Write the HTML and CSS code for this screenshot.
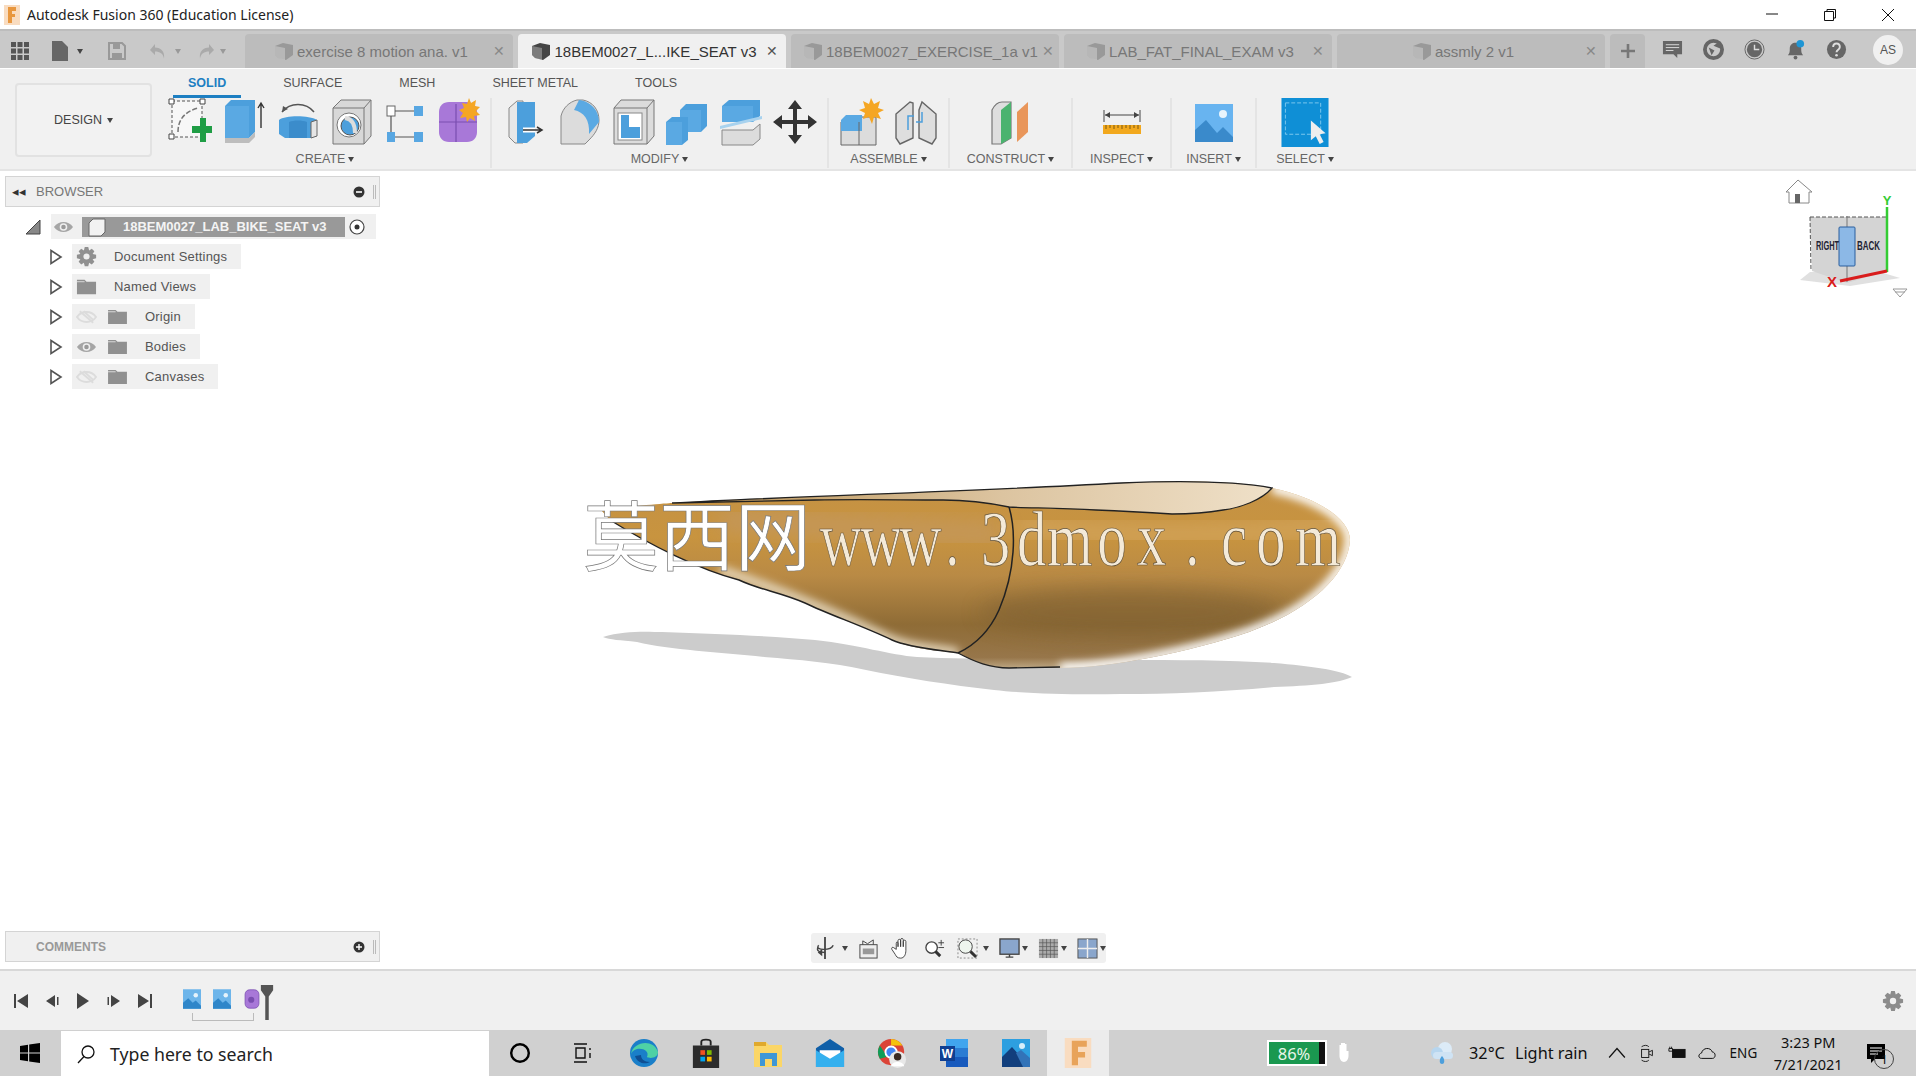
FILE: index.html
```html
<!DOCTYPE html>
<html lang="en">
<head>
    <meta charset="UTF-8">
    <title>Autodesk Fusion 360 (Education License)</title>
    <link rel="stylesheet" href="styles.css">
</head>
<body>
<svg class="defs" width="0" height="0">
    <defs>
        <symbol id="tabcube" viewBox="0 0 20 20"><path d="M1 5l8-3 10 2v10l-7 5-8-2-3-3z" fill="currentColor"/><path d="M1 5l10 2v12l-7-2-3-3z" fill="#fff" opacity=".3"/></symbol>
        <symbol id="folder" viewBox="0 0 22 18"><path d="M1 2h8l2 2h10v13H1z" fill="#909090"/><path d="M1 4h8" stroke="#ddd" stroke-width="1"/></symbol>
        <symbol id="eye" viewBox="0 0 22 14"><path d="M1 7c5-7 15-7 20 0-5 7-15 7-20 0z" fill="#a5a5a5"/><circle cx="11" cy="7" r="4" fill="#eee"/><circle cx="11" cy="7" r="2.4" fill="#999"/></symbol>
        <symbol id="eyeoff" viewBox="0 0 22 14"><path d="M1 7c5-7 15-7 20 0-5 7-15 7-20 0z" fill="none" stroke="#dcdcdc" stroke-width="2"/><path d="M4 1l14 12M8 1l10 9" stroke="#dcdcdc" stroke-width="2"/></symbol>
        <symbol id="expand" viewBox="0 0 14 16"><path d="M2 1.500l10 6.500-10 6.500z" fill="#fff" stroke="#555" stroke-width="1.600"/></symbol>
        <symbol id="photo" viewBox="0 0 24 26"><rect width="24" height="26" fill="#6db5ea"/><circle cx="17" cy="8" r="3" fill="#e6f3fb"/><path d="M0 26v-8l7-6 6 6 4-3 7 7v4z" fill="#2f86c9"/></symbol>
    </defs>
</svg>

<div class="app">
    <div class="titlebar">
        <svg class="app-logo" viewBox="0 0 16 20"><rect width="16" height="20" fill="#f9dcc0"/><path d="M4 2h8v4H8v3h3v3H8v6H4z" fill="#e8973e"/></svg>
        <span class="title-text">Autodesk Fusion 360 (Education License)</span>
        <div class="win-btns">
            <svg viewBox="0 0 14 14"><path d="M1 6h12" stroke="#111" stroke-width="1"/></svg>
            <svg viewBox="0 0 14 14"><path d="M1.500 3.500h9v9h-9zM4 3.500V1.500h8.500V10h-2" fill="none" stroke="#111"/></svg>
            <svg viewBox="0 0 14 14"><path d="M1 1l12 12M13 1L1 13" stroke="#111"/></svg>
        </div>
    </div>

    <div class="tabbar">
        <div class="quick">
            <svg class="q-grid" viewBox="0 0 18 18"><path d="M0 0h5v5H0zM6.500 0h5v5h-5zM13 0h5v5h-5zM0 6.500h5v5H0zM6.500 6.500h5v5h-5zM13 6.500h5v5h-5zM0 13h5v5H0zM6.500 13h5v5h-5zM13 13h5v5h-5z" fill="#555"/></svg>
            <svg class="q-file" viewBox="0 0 16 20"><path d="M0 0h10l6 6v14H0z" fill="#666"/></svg>
            <span class="caret q-c1"></span>
            <svg class="q-save" viewBox="0 0 18 18"><path d="M1 1h13l3 3v13H1z" fill="none" stroke="#999" stroke-width="2"/><path d="M5 2h7v5H5zM4 11h10v6H4z" fill="#999"/></svg>
            <svg class="q-undo" viewBox="0 0 18 18"><path d="M6 2L1 8l5 5V9.500c5 0 8 2 9 7 1-7-3-11-9-11z" fill="#aaa"/></svg>
            <span class="caret q-c2"></span>
            <svg class="q-redo" viewBox="0 0 18 18"><path d="M12 2l5 6-5 5V9.500c-5 0-8 2-9 7-1-7 3-11 9-11z" fill="#aaa"/></svg>
            <span class="caret q-c3"></span>
        </div>
        <div class="tabs">
            <div class="tab">
                <div class="tab-label"><svg class="tab-cube"><use href="#tabcube"/></svg>exercise 8 motion ana. v1</div>
                <span class="tab-close">✕</span>
            </div>
            <div class="tab tab-active">
                <div class="tab-label"><svg class="tab-cube"><use href="#tabcube"/></svg>18BEM0027_L...IKE_SEAT v3</div>
                <span class="tab-close">✕</span>
            </div>
            <div class="tab">
                <div class="tab-label"><svg class="tab-cube"><use href="#tabcube"/></svg>18BEM0027_EXERCISE_1a v1</div>
                <span class="tab-close">✕</span>
            </div>
            <div class="tab">
                <div class="tab-label"><svg class="tab-cube"><use href="#tabcube"/></svg>LAB_FAT_FINAL_EXAM v3</div>
                <span class="tab-close">✕</span>
            </div>
            <div class="tab">
                <div class="tab-label"><svg class="tab-cube"><use href="#tabcube"/></svg>assmly 2 v1</div>
                <span class="tab-close">✕</span>
            </div>
            <div class="tab-add"><svg viewBox="0 0 16 16"><path d="M8 1v14M1 8h14" stroke="#777" stroke-width="2.600"/></svg></div>
        </div>
        <div class="tools-right">
            <svg viewBox="0 0 22 20"><path d="M1 1h20v14h-5v4l-4-4H1z" fill="#666"/><path d="M4 5h14M4 8h14M4 11h8" stroke="#ddd"/></svg>
            <svg viewBox="0 0 22 22"><circle cx="11" cy="11" r="9" fill="none" stroke="#666" stroke-width="4"/><path d="M11 7l7-5v8zM6 9l6 3-3 5z" fill="#666"/></svg>
            <svg viewBox="0 0 22 22"><circle cx="11" cy="11" r="10" fill="none" stroke="#666"/><circle cx="11" cy="11" r="8" fill="#666"/><path d="M11 6v5h5" fill="none" stroke="#ddd" stroke-width="1.500"/></svg>
            <svg viewBox="0 0 22 22"><path d="M3 17c2-2 2-4 2-7 0-4 3-6 6-6s6 2 6 6c0 3 0 5 2 7z" fill="#666"/><circle cx="11" cy="19.500" r="2" fill="#666"/><circle cx="16" cy="5" r="4" fill="#1e95d4"/></svg>
            <svg viewBox="0 0 22 22"><circle cx="11" cy="11" r="10" fill="#666"/><path d="M7.500 8.500c0-5 7-5 7 0 0 3-3.500 2.500-3.500 5.500" fill="none" stroke="#ddd" stroke-width="2"/><circle cx="11" cy="17" r="1.400" fill="#ddd"/></svg>
            <span class="avatar">AS</span>
        </div>
    </div>

    <div class="ribbon">
        <div class="design-btn">DESIGN<span class="caret"></span></div>
        <div class="ribbon-main">
            <div class="ribbon-tabs">
                <span class="r-tab r-tab-active">SOLID</span>
                <span class="r-tab">SURFACE</span>
                <span class="r-tab">MESH</span>
                <span class="r-tab">SHEET METAL</span>
                <span class="r-tab">TOOLS</span>
            </div>
            <div class="ribbon-groups">
                <div class="group g-create">
                    <div class="group-icons">
                        <svg viewBox="0 0 44 48"><rect x="4" y="3" width="30" height="36" fill="#f7f7f7" stroke="#555" stroke-dasharray="3 2"/><path d="M1 1h5v5H1zM32 1h5v5h-5zM1 36h5v5H1z" fill="#fff" stroke="#444"/><path d="M10 34c0-12 6-20 20-24" fill="none" stroke="#777" stroke-width="1.500" stroke-dasharray="5 2"/><path d="M24 28h8v-8h6v8h6v7h-6v9h-6v-9h-8z" fill="#1f9d45"/></svg>
                        <svg viewBox="0 0 44 48"><path d="M3 8l6-6h24v32l-6 6H3z" fill="#4c9fdc"/><path d="M3 8h24v32H3z" fill="#5aa9e3"/><path d="M3 40h24l6-6v5l-6 6H3z" fill="#bdbdbd"/><path d="M39 30V6m-3 4l3-5 3 5" fill="none" stroke="#333" stroke-width="1.400"/></svg>
                        <svg viewBox="0 0 44 48"><path d="M3 22c6-5 30-5 38 0v16l-6 2H9l-6-4z" fill="#4c9fdc"/><path d="M13 24c5-2 13-2 18 0v16H13z" fill="#3b8ccb"/><path d="M35 24l6-2v16l-6 2z" fill="#e5e5e5" stroke="#666"/><path d="M6 14C14 4 30 4 38 14" fill="none" stroke="#555" stroke-width="1.500"/><path d="M6 14l1-6 5 3z" fill="#555"/></svg>
                        <svg viewBox="0 0 44 48"><path d="M3 10l8-8h30v36l-7 8H3z" fill="#d8d8d8" stroke="#777"/><path d="M3 10h31v36M34 10l7-8" fill="none" stroke="#777"/><circle cx="19" cy="27" r="12" fill="#fff" stroke="#777"/><circle cx="20" cy="28" r="9" fill="#4c9fdc" stroke="#555"/><path d="M15 20c8 1 10 7 10 15" fill="none" stroke="#ddd" stroke-width="4"/></svg>
                        <svg viewBox="0 0 44 48"><rect x="3" y="8" width="8" height="10" fill="#fff" stroke="#666"/><rect x="30" y="8" width="9" height="10" fill="#58a7e2"/><rect x="3" y="34" width="8" height="10" fill="#58a7e2"/><rect x="30" y="34" width="9" height="10" fill="#58a7e2"/><path d="M11 13h19M7 18v16M11 39h19" stroke="#555" stroke-width="1.200"/></svg>
                        <svg viewBox="0 0 44 48"><path d="M1 14c0-6 4-10 10-10h18c6 0 10 4 10 10v20c0 6-4 10-10 10H11C5 44 1 40 1 34z" fill="#a878d8"/><path d="M1 24h38M18 6v38" stroke="#7a4eb0" stroke-width="1.200"/><path d="M31 0l2 5 5-3-1 6 5 1-4 4 4 4-6 1 1 5-5-3-3 4-1-5-6 1 3-5-4-3 5-2-2-5 5 1z" fill="#f5a623"/></svg>
                    </div>
                    <div class="group-label">CREATE<span class="caret"></span></div>
                </div>
                <div class="group g-modify">
                    <div class="group-icons">
                        <svg viewBox="0 0 44 48"><path d="M6 10l8-7h6v42h-8l-6-6z" fill="#e8e8e8" stroke="#888"/><path d="M14 4h18v34l-8 7H14z" fill="#4c9fdc"/><path d="M20 32h12" stroke="#fff" stroke-width="5"/><path d="M20 32h18m-4-3l5 3-5 3" fill="none" stroke="#333" stroke-width="1.500"/></svg>
                        <svg viewBox="0 0 44 48"><path d="M4 18C6 10 12 4 20 2h6c10 2 16 10 16 20 0 8-4 14-10 20l-4 4H4z" fill="#dcdcdc" stroke="#888"/><path d="M22 2c10 1 20 9 20 22l-10 12C33 22 27 14 17 12z" fill="#5aa9e3"/></svg>
                        <svg viewBox="0 0 44 48"><path d="M3 10l7-8h33v36l-7 8H3z" fill="#dcdcdc" stroke="#777"/><path d="M3 10h33v36M36 10l7-8" fill="none" stroke="#777"/><rect x="7" y="15" width="24" height="27" fill="#fff" stroke="#888"/><path d="M10 17h8v12h11v11H10z" fill="#4c9fdc"/></svg>
                        <svg viewBox="0 0 44 48"><path d="M15 12l6-6h21v22l-6 6H15z" fill="#4c9fdc"/><path d="M15 12h21v22H15z" fill="#5aa9e3"/><path d="M1 24l6-5h16v23l-6 5H1z" fill="#4c9fdc"/><path d="M1 24h16v23H1z" fill="#5aa9e3"/></svg>
                        <svg viewBox="0 0 44 48"><path d="M3 8l7-6h31v16l-7 6H3z" fill="#4c9fdc"/><path d="M3 8h31v16H3z" fill="#5aa9e3"/><path d="M1 28L43 18v3L1 31z" fill="#a8d2ee"/><path d="M3 32h31l7-6v15l-7 6H3z" fill="#dcdcdc" stroke="#888"/></svg>
                        <svg viewBox="0 0 44 48"><path d="M22 2l7 9h-5v11h11v-5l9 7-9 7v-5H24v11h5l-7 9-7-9h5V26H9v5l-9-7 9-7v5h11V11h-5z" fill="#333"/></svg>
                    </div>
                    <div class="group-label">MODIFY<span class="caret"></span></div>
                </div>
                <div class="group g-assemble">
                    <div class="group-icons">
                        <svg viewBox="0 0 44 48"><path d="M1 24l5-5h30v28H1z" fill="#dcdcdc" stroke="#666"/><path d="M1 22l5-5h16v16H1z" fill="#5aa9e3"/><path d="M19 24v23" stroke="#666"/><path d="M31 0l3 6 6-3-2 7 6 2-6 3 3 6-7-2-2 7-3-7-6 2 2-6-6-3 6-2-2-7 6 3z" fill="#f5a623"/></svg>
                        <svg viewBox="0 0 44 48"><path d="M2 16l14-12 3 1v35l-13 6-4-6zM42 16L28 4l-3 8v28l13 6 4-6z" fill="#dedede" stroke="#666" stroke-width="1.400"/><path d="M14 32v-14h6M28 14v10h-6" fill="none" stroke="#4c9fdc" stroke-width="1.500"/></svg>
                    </div>
                    <div class="group-label">ASSEMBLE<span class="caret"></span></div>
                </div>
                <div class="group g-construct">
                    <div class="group-icons">
                        <svg viewBox="0 0 44 48"><path d="M3 12c2-4 6-8 10-8h9v36l-10 6H3z" fill="#dedede" stroke="#777" stroke-width="1.200"/><path d="M12 46V12l10-8v36z" fill="#4bb36f"/><path d="M28 44V14l11-10v30z" fill="#e9965a"/></svg>
                    </div>
                    <div class="group-label">CONSTRUCT<span class="caret"></span></div>
                </div>
                <div class="group g-inspect">
                    <div class="group-icons">
                        <svg viewBox="0 0 44 48"><path d="M4 12v12M40 12v12" stroke="#444"/><path d="M5 17h34" stroke="#444"/><path d="M5 17l5-3v6zM39 17l-5-3v6z" fill="#444"/><rect x="3" y="27" width="38" height="9" fill="#f2a81d"/><path d="M6 27v4M10 27v3M14 27v4M18 27v3M22 27v4M26 27v3M30 27v4M34 27v3M38 27v4" stroke="#7d5a10"/></svg>
                    </div>
                    <div class="group-label">INSPECT<span class="caret"></span></div>
                </div>
                <div class="group g-insert">
                    <div class="group-icons">
                        <svg viewBox="0 0 44 48"><rect x="3" y="6" width="38" height="38" fill="#68b4f0"/><circle cx="31" cy="16" r="4" fill="#e8f4fc"/><path d="M3 44V32l11-10 11 13 6-6 10 10v5z" fill="#3a8acb"/></svg>
                    </div>
                    <div class="group-label">INSERT<span class="caret"></span></div>
                </div>
                <div class="group g-select">
                    <div class="group-icons">
                        <svg class="select-icon" viewBox="0 0 48 50"><rect width="48" height="50" fill="#0f8fd6"/><rect x="4" y="5" width="36" height="32" fill="none" stroke="#7cc8ee" stroke-dasharray="4 2"/><path d="M30 23v20l5-4 4 8 4-2-4-8 6-1z" fill="#eee"/></svg>
                    </div>
                    <div class="group-label">SELECT<span class="caret"></span></div>
                </div>
            </div>
        </div>
    </div>

    <div class="workspace">
        <div class="panel panel-browser">
            <span class="panel-back">◂◂</span>
            <span class="panel-title">BROWSER</span>
            <svg class="panel-dot" viewBox="0 0 12 12"><circle cx="6" cy="6" r="5.500" fill="#333"/><path d="M3 6h6" stroke="#fff" stroke-width="1.600"/></svg>
            <span class="panel-handle"></span>
        </div>

        <div class="tree">
            <div class="tree-root">
                <svg class="tree-arrow-root" viewBox="0 0 16 16"><path d="M1 15L15 1v14z" fill="#888" stroke="#444"/></svg>
                <div class="root-body">
                    <svg class="eye"><use href="#eye"/></svg>
                    <div class="root-name">
                        <svg class="root-cube" viewBox="0 0 20 20"><path d="M2 6l4-4h12v13l-4 4H2z" fill="#f2f2f2" stroke="#666"/></svg>
                        <span>18BEM0027_LAB_BIKE_SEAT v3</span>
                    </div>
                    <svg class="root-radio" viewBox="0 0 16 16"><circle cx="8" cy="8" r="7" fill="#fff" stroke="#444" stroke-width="1.200"/><circle cx="8" cy="8" r="2.500" fill="#333"/></svg>
                </div>
            </div>
            <div class="tree-row">
                <svg class="expand"><use href="#expand"/></svg>
                <div class="pill">
                    <svg class="pill-icon" viewBox="0 0 24 24"><path d="M10 1h4l1 4 3-2 3 3-2 3 4 1v4l-4 1 2 3-3 3-3-2-1 4h-4l-1-4-3 2-3-3 2-3-4-1v-4l4-1-2-3 3-3 3 2z" fill="#909090"/><circle cx="12" cy="12" r="3.500" fill="#eee"/></svg>
                    <span class="pill-text">Document Settings</span>
                </div>
            </div>
            <div class="tree-row">
                <svg class="expand"><use href="#expand"/></svg>
                <div class="pill">
                    <svg class="pill-icon"><use href="#folder"/></svg>
                    <span class="pill-text">Named Views</span>
                </div>
            </div>
            <div class="tree-row">
                <svg class="expand"><use href="#expand"/></svg>
                <div class="pill">
                    <svg class="eye"><use href="#eyeoff"/></svg>
                    <svg class="pill-folder"><use href="#folder"/></svg>
                    <span class="pill-text">Origin</span>
                </div>
            </div>
            <div class="tree-row">
                <svg class="expand"><use href="#expand"/></svg>
                <div class="pill">
                    <svg class="eye"><use href="#eye"/></svg>
                    <svg class="pill-folder"><use href="#folder"/></svg>
                    <span class="pill-text">Bodies</span>
                </div>
            </div>
            <div class="tree-row">
                <svg class="expand"><use href="#expand"/></svg>
                <div class="pill">
                    <svg class="eye"><use href="#eyeoff"/></svg>
                    <svg class="pill-folder"><use href="#folder"/></svg>
                    <span class="pill-text">Canvases</span>
                </div>
            </div>
        </div>

        <!-- 3D model, drawn on the canvas -->
        <svg class="model" viewBox="560 460 800 250">
            <defs>
                <linearGradient id="body" x1="0" y1="0" x2="0" y2="1">
                    <stop offset="0" stop-color="#c49145"/>
                    <stop offset=".3" stop-color="#c8943f"/>
                    <stop offset=".5" stop-color="#b98a45"/>
                    <stop offset=".75" stop-color="#8f6c36"/>
                    <stop offset=".92" stop-color="#97764a"/>
                    <stop offset="1" stop-color="#cdbb9c"/>
                </linearGradient>
                <linearGradient id="recess" x1="0" y1="0" x2="1" y2="0">
                    <stop offset="0" stop-color="#b89052"/>
                    <stop offset=".55" stop-color="#dcc4a0"/>
                    <stop offset="1" stop-color="#efe0c8"/>
                </linearGradient>
                <filter id="soft" x="-10%" y="-10%" width="120%" height="120%"><feGaussianBlur stdDeviation="4"/></filter>
                <filter id="softer" x="-20%" y="-50%" width="140%" height="200%"><feGaussianBlur stdDeviation="10"/></filter>
                <clipPath id="seatclip"><path d="M601 510C640 505 672 503 672 503C800 496 960 492 1121 483C1170 481 1230 480 1272 488C1320 498 1350 520 1350 540C1348 575 1310 610 1249 632C1190 652 1110 668 1060 668L1009 668C990 668 975 662 958 653C930 650 910 648 892 640C860 625 830 615 805 603C780 592 760 590 739 580C700 570 650 545 610 520z"/></clipPath>
            </defs>
            <path d="M603 637C625 630 650 632 662 632C720 634 770 636 815 640C860 645 890 655 917 657C980 660 1060 658 1121 660C1180 660 1230 660 1274 663C1310 666 1340 670 1352 677C1340 683 1310 686 1274 687C1220 692 1170 694 1121 694C1080 695 1030 694 994 690C950 685 905 678 866 670C830 662 800 660 764 657C720 652 670 650 637 642C620 640 610 640 603 637z" fill="#cccccc"/>
            <g clip-path="url(#seatclip)">
                <rect x="590" y="478" width="770" height="195" fill="url(#body)"/>
                <path d="M720 520L1000 535" stroke="#c4975a" stroke-width="22" fill="none" filter="url(#softer)"/>
                <path d="M1015 525C1120 540 1250 535 1340 525" stroke="#d3a45c" stroke-width="18" fill="none" filter="url(#softer)"/>
                <ellipse cx="1130" cy="612" rx="150" ry="24" fill="#7d5f30" opacity=".55" filter="url(#softer)"/>
                <path d="M672 503C800 496 960 492 1121 483C1170 481 1230 480 1272 488C1262 500 1240 508 1223 510C1200 514 1185 514 1172 514C1140 512 1120 511 1096 510C1060 508 1030 508 1009 507C985 502 960 500 943 500C900 500 860 499 815 500C760 501 710 502 672 503z" fill="url(#recess)"/>
                <path d="M720 570C780 590 830 610 892 640C915 650 940 648 958 653" fill="none" stroke="#e6d8bd" stroke-width="9" filter="url(#soft)"/>
                <path d="M1272 488C1320 498 1350 520 1350 540C1348 575 1310 610 1249 632C1190 652 1110 668 1060 668" fill="none" stroke="#fff" stroke-width="10" filter="url(#soft)"/>
            </g>
            <path d="M672 503C800 496 960 492 1121 483C1170 481 1230 480 1272 488C1262 500 1240 508 1223 510C1200 514 1185 514 1172 514C1140 512 1120 511 1096 510C1060 508 1030 508 1009 507C985 502 960 500 943 500C900 500 860 499 815 500C760 501 710 502 672 503z" fill="none" stroke="#222" stroke-width="1.300"/>
            <path d="M1009 507C1016 530 1016 570 999 610C990 630 975 645 958 653" fill="none" stroke="#222" stroke-width="1.500"/>
            <path d="M610 520C650 545 700 570 739 580C760 590 780 592 805 603C830 615 860 625 892 640C910 648 940 650 958 653C975 662 990 668 1009 668L1060 667" fill="none" stroke="#222" stroke-width="1.400"/>
            <text class="mark mark-cjk" x="583" y="565">莫西网</text>
            <text class="mark mark-latin" transform="translate(816 0) scale(.75 1)" x="5 59 111 172 195 220 268 308 375 428 492 515 540 587 639" y="565">www. 3dmox. com</text>
        </svg>

        <svg class="viewcube" viewBox="1780 175 136 135">
            <path d="M1798 180l-12 12h3v11h20v-11h3z" fill="#fff" stroke="#888"/>
            <rect x="1795" y="194" width="5" height="9" fill="#666"/>
            <path d="M1800 280l50 6 50-8-20-6h-70z" fill="#ccc" opacity=".6"/>
            <path d="M1810 217h77v54l-40 12-35-12z" fill="#d4d4d4"/>
            <path d="M1810 217h77M1810 217l1 54" fill="none" stroke="#555" stroke-dasharray="4 2"/>
            <path d="M1847 216v66" stroke="#777"/>
            <rect x="1839" y="227" width="16" height="39" rx="1" fill="#8cb8e6" stroke="#2a5f9e"/>
            <text class="cube-text" x="1816" y="250" textLength="23" lengthAdjust="spacingAndGlyphs">RIGHT</text>
            <text class="cube-text" x="1857" y="250" textLength="23" lengthAdjust="spacingAndGlyphs">BACK</text>
            <path d="M1887 207v65" stroke="#33cc33" stroke-width="2.500"/>
            <text class="axis-y" x="1887" y="205">Y</text>
            <path d="M1840 281l47-10" stroke="#d91c1c" stroke-width="3"/>
            <text class="axis-x" x="1827" y="287">X</text>
            <path d="M1893 289h14l-7 8z" fill="#fff" stroke="#999"/>
            <path d="M1895 292h10" stroke="#999"/>
        </svg>

        <div class="panel panel-comments">
            <span class="panel-title panel-title-sm">COMMENTS</span>
            <svg class="panel-dot" viewBox="0 0 12 12"><circle cx="6" cy="6" r="5.500" fill="#333"/><path d="M3 6h6M6 3v6" stroke="#fff" stroke-width="1.400"/></svg>
            <span class="panel-handle"></span>
        </div>

        <div class="navbar">
            <svg class="nav-orbit" viewBox="0 0 22 26"><path d="M11 1v24" stroke="#444" stroke-width="2"/><path d="M4 10c-5 6 14 6 16 0M4 10c-4 7 2 8 7 8" fill="none" stroke="#444" stroke-width="1.500"/><path d="M8 14l-5 4 5 4z" fill="#444"/></svg>
            <span class="caret nav-caret-first"></span>
            <svg class="nav-icon" viewBox="0 0 22 22"><rect x="2" y="7" width="18" height="14" fill="#eee" stroke="#444"/><rect x="5" y="11" width="12" height="6" fill="#999"/><path d="M5 7V3l5 3 6-4v5" fill="none" stroke="#444"/></svg>
            <svg class="nav-icon" viewBox="0 0 22 24"><path d="M5 13V6c0-2 2-2 2 0v4-7c0-2 3-2 3 0v7-8c0-2 3-2 3 0v8-6c0-2 3-2 3 0v10c0 5-2 9-6 9-4 0-5-2-6-4l-4-6c-1-2 1-3 2-2z" fill="#fff" stroke="#333"/></svg>
            <svg class="nav-icon" viewBox="0 0 22 22"><circle cx="8" cy="10" r="6" fill="#fff" stroke="#444" stroke-width="1.400"/><path d="M12 14l5 5" stroke="#333" stroke-width="3"/><path d="M18 2v6M15 5h6M15 10h6" stroke="#444"/></svg>
            <svg class="nav-icon" viewBox="0 0 22 22"><rect x="1" y="1" width="20" height="20" fill="none" stroke="#888" stroke-dasharray="2 2"/><circle cx="9" cy="9" r="7" fill="#eef5ee" stroke="#444"/><path d="M14 14l6 6" stroke="#333" stroke-width="3"/></svg>
            <span class="caret"></span>
            <svg class="nav-icon" viewBox="0 0 22 22"><rect x="1" y="1" width="20" height="16" fill="#8aa6cc" stroke="#444" stroke-width="1.400"/><path d="M7 20h8M11 17v3" stroke="#444" stroke-width="1.500"/></svg>
            <span class="caret nav-caret-near"></span>
            <svg class="nav-icon" viewBox="0 0 22 22"><rect x="1" y="1" width="20" height="20" fill="#aaa"/><path d="M5 1v20M9 1v20M13 1v20M17 1v20M1 5h20M1 9h20M1 13h20M1 17h20" stroke="#555" stroke-width=".7"/></svg>
            <span class="caret nav-caret-near"></span>
            <svg class="nav-icon" viewBox="0 0 22 22"><rect x="1" y="1" width="20" height="20" fill="#8aa6cc" stroke="#555"/><path d="M11 1v20M1 11h20" stroke="#eee" stroke-width="1.500"/></svg>
            <span class="caret nav-caret-near"></span>
        </div>
    </div>

    <div class="timeline">
        <div class="player">
            <svg viewBox="0 0 16 16"><path d="M1 1h2v14H1zM15 1v14L4 8z" fill="#444"/></svg>
            <svg viewBox="0 0 16 16"><path d="M11 2v12L2 8zM13 4h1.500v8H13z" fill="#444"/></svg>
            <svg viewBox="0 0 16 16"><path d="M2 0v16l12-8z" fill="#444"/></svg>
            <svg viewBox="0 0 16 16"><path d="M5 2v12l9-6zM1.500 4H3v8H1.500z" fill="#444"/></svg>
            <svg viewBox="0 0 16 16"><path d="M1 1v14l11-7zM13 1h2v14h-2z" fill="#444"/></svg>
        </div>
        <div class="features">
            <div class="feature-icons">
                <svg class="feature"><use href="#photo"/></svg>
                <svg class="feature"><use href="#photo"/></svg>
                <svg class="feature feature-form" viewBox="0 0 20 26"><rect x="1" y="1" width="18" height="24" rx="6" fill="#a878d8" stroke="#7a4eb0"/><circle cx="9" cy="14" r="4" fill="#7a4eb0"/></svg>
            </div>
            <div class="feature-bracket"></div>
            <svg class="marker" viewBox="0 0 16 40"><path d="M1 0h14v6l-5 7v27H6V13L1 6z" fill="#555"/></svg>
        </div>
        <svg class="timeline-gear" viewBox="0 0 24 24"><path d="M10 1h4l1 4 3-2 3 3-2 3 4 1v4l-4 1 2 3-3 3-3-2-1 4h-4l-1-4-3 2-3-3 2-3-4-1v-4l4-1-2-3 3-3 3 2z" fill="#8c8c8c"/><circle cx="12" cy="12" r="3.500" fill="#f0f0f0"/></svg>
    </div>

    <div class="taskbar">
        <svg class="win-logo" viewBox="0 0 20 20"><path d="M0 3l8-1.200V9.500H0zM9.200 1.600L20 0v9.500H9.200zM0 10.500h8v7.700L0 17zM9.200 10.500H20V20L9.200 18.400z" fill="#000"/></svg>
        <div class="search">
            <svg viewBox="0 0 20 20"><circle cx="12" cy="8" r="6" fill="none" stroke="#111" stroke-width="1.300"/><path d="M8 12.500L2 19" stroke="#111" stroke-width="1.300"/></svg>
            <span>Type here to search</span>
        </div>
        <div class="task-apps">
            <div class="task-app"><svg viewBox="0 0 20 20"><circle cx="10" cy="10" r="8" fill="none" stroke="#000" stroke-width="2.200"/></svg></div>
            <div class="task-app"><svg viewBox="0 0 22 22"><path d="M3 2h13M3 20h13M5 6h9v10H5zM19 6v2M19 11v5" fill="none" stroke="#111" stroke-width="1.400"/></svg></div>
            <div class="task-app"><svg class="app-big" viewBox="0 0 30 30"><circle cx="15" cy="15" r="14" fill="#1a7fc9"/><path d="M2 16C4 4 24 0 29 14c0 6-8 7-11 5 4-8-12-12-16-3z" fill="#4ed1a5"/><path d="M6 18c2 7 10 9 15 6-6 0-9-3-9-7z" fill="#0f4f93"/></svg></div>
            <div class="task-app"><svg class="app-big" viewBox="0 0 30 32"><path d="M10 8V4c0-3 10-3 10 0v4" fill="none" stroke="#222" stroke-width="2"/><rect x="1" y="8" width="28" height="24" fill="#2c2c2c"/><path d="M9 13h5v5H9z" fill="#f25022"/><path d="M16 13h5v5h-5z" fill="#7fba00"/><path d="M9 20h5v5H9z" fill="#00a4ef"/><path d="M16 20h5v5h-5z" fill="#ffb900"/></svg></div>
            <div class="task-app"><svg class="app-big" viewBox="0 0 30 30"><path d="M1 4h12l3 3h13v22H1z" fill="#fbd667"/><path d="M1 4h12v4H1z" fill="#e0a92c"/><path d="M7 15h17v13h-5v-7h-7v7H7z" fill="#3f97d6"/></svg></div>
            <div class="task-app"><svg class="app-big" viewBox="0 0 32 30"><path d="M1 10L16 0l15 10v20H1z" fill="#0f5fa8"/><path d="M5 12h22v8l-11 6-11-6z" fill="#fff"/><path d="M1 12l15 9 15-9v18H1z" fill="#35b0ee"/></svg></div>
            <div class="task-app"><svg class="app-big" viewBox="0 0 32 32"><circle cx="15" cy="15" r="14" fill="#db4437"/><path d="M15 1a14 14 0 0 1 12 7H15z" fill="#f4c20d"/><path d="M3 22A14 14 0 0 1 3 8l8 12z" fill="#0f9d58"/><circle cx="15" cy="15" r="6" fill="#4285f4" stroke="#fff" stroke-width="2"/><circle cx="22" cy="23" r="9" fill="#e8e8e8"/><circle cx="22" cy="20" r="4" fill="#3a2a22"/><path d="M15 30c1-6 13-6 14 0z" fill="#fff"/></svg></div>
            <div class="task-app"><svg class="app-big" viewBox="0 0 30 30"><path d="M7 1h22v28H7z" fill="#185abd"/><path d="M7 1h22v9H7z" fill="#41a5ee"/><path d="M7 10h22v9H7z" fill="#2b7cd3"/><rect x="1" y="8" width="15" height="15" fill="#103f91"/><text class="word-w" x="8.500" y="20">W</text></svg></div>
            <div class="task-app"><svg class="app-big" viewBox="0 0 30 30"><rect x="1" y="1" width="28" height="28" fill="#2d9fe0"/><circle cx="21" cy="8" r="3" fill="#d6eefa"/><path d="M1 29V19l10-10 18 20z" fill="#123f7d"/><path d="M15 15l5-3 9 8v9H22z" fill="#3273b8"/></svg></div>
            <div class="task-app task-app-active"><svg class="app-big" viewBox="0 0 30 34"><rect width="30" height="34" fill="#f9dcc0"/><path d="M8 3h17v7H15v6h8v6h-8v9H8z" fill="#e8a35a"/></svg></div>
        </div>
        <div class="battery"><span class="battery-fill">86%</span><span class="battery-end"></span></div>
        <svg class="tray-hand" viewBox="0 0 14 20"><path d="M2.500 9V2h1.500v6V0h2v8V0h2v8V1h1.500v7h2v5c0 3-2 6-4.500 6S2.500 16 2.500 13z" fill="#fff"/></svg>
        <div class="tray">
            <svg class="tray-weather" viewBox="0 0 26 26"><circle cx="16" cy="9" r="7" fill="#dcebf7"/><circle cx="8" cy="13" r="6" fill="#b7d6ef"/><rect x="4" y="12" width="20" height="7" rx="3.500" fill="#cfe3f4"/><path d="M13 16c3 3 3 8 0 8s-3-5 0-8z" fill="#4d9fdc"/></svg>
            <span class="temp">32°C</span>
            <span class="cond">Light rain</span>
            <svg class="tray-ic tray-chevron" viewBox="0 0 16 16"><path d="M1 12l7-8 7 8" fill="none" stroke="#111" stroke-width="1.100"/></svg>
            <svg class="tray-ic" viewBox="0 0 16 20"><rect x="2" y="6" width="8" height="9" fill="none" stroke="#111"/><path d="M10 9l4-2v6l-4-2M2 3c3-2 6-2 8 0M2 18c3 2 6 2 8 0" fill="none" stroke="#111"/></svg>
            <svg class="tray-ic" viewBox="0 0 20 16"><rect x="5" y="4" width="14" height="9" fill="#111" stroke="#111"/><path d="M1 3h4v3H1zM2 1v2M4 1v2" fill="none" stroke="#111"/></svg>
            <svg class="tray-ic" viewBox="0 0 20 16"><path d="M4 14c-4 0-4-5 0-6 1-6 10-7 12-1 4 0 4 7 0 7z" fill="none" stroke="#111" stroke-width="1.100"/></svg>
            <span class="lang">ENG</span>
            <div class="clock"><span>3:23 PM</span><span>7/21/2021</span></div>
            <div class="notif">
                <svg viewBox="0 0 20 20"><path d="M1 1h18v15H9l-4 4v-4H1z" fill="#000"/><path d="M4 5h12M4 8h12M4 11h8" stroke="#fff"/></svg>
                <span class="notif-count">1</span>
            </div>
        </div>
    </div>
</div>
</body>
</html>
```

FILE: styles.css
```css
/* Fusion 360 window */
* {
    box-sizing: border-box;
}

html, body {
    margin: 0;
    padding: 0;
    height: 100%;
    overflow: hidden;
    background-color: #fff;
}

body {
    font-family: "Liberation Sans", Arial, sans-serif;
    color: #555;
}

.defs {
    position: absolute;
}

svg {
    display: block;
    flex: none;
}

.app {
    display: flex;
    flex-direction: column;
    width: 1916px;
    height: 1076px;
}

.caret {
    display: inline-block;
    width: 0;
    height: 0;
    border-left: 3.5px solid transparent;
    border-right: 3.5px solid transparent;
    border-top: 5px solid #444;
    flex: none;
}

/* title bar */
.titlebar {
    display: flex;
    align-items: center;
    flex: none;
    height: 29px;
    padding-left: 4px;
    background-color: #fff;
}

.app-logo {
    width: 16px;
    height: 20px;
}

.title-text {
    margin-left: 7px;
    font-family: "Noto Sans", sans-serif;
    font-size: 14px;
    color: #222;
}

.win-btns {
    display: flex;
    gap: 44px;
    margin-left: auto;
    margin-right: 21px;
}

.win-btns svg {
    width: 14px;
    height: 14px;
}

/* tab bar */
.tabbar {
    display: flex;
    flex: none;
    height: 40px;
    padding-top: 3px;
    background-color: #c9c9c9;
    border-top: 2px solid #bdbdbd;
    border-bottom: 1px solid #fff;
}

.quick {
    display: flex;
    align-items: center;
    width: 245px;
}

.q-grid { width: 18px; height: 18px; margin-left: 11px; }
.q-file { width: 16px; height: 20px; margin-left: 23px; }
.q-c1 { margin-left: 9px; }
.q-save { width: 18px; height: 18px; margin-left: 25px; }
.q-undo { width: 18px; height: 18px; margin-left: 23px; }
.q-c2 { margin-left: 8px; border-top-color: #999; }
.q-redo { width: 18px; height: 18px; margin-left: 16px; }
.q-c3 { margin-left: 5px; border-top-color: #999; }

.tabs {
    display: flex;
    gap: 5px;
}

.tab {
    display: flex;
    align-items: center;
    width: 268px;
    background-color: #bcbcbc;
    border-radius: 4px 4px 0 0;
    color: #777;
    font-size: 15px;
}

.tab-active {
    background-color: #f0f0f0;
    color: #333;
}

.tab-label {
    display: flex;
    flex: 1;
    align-items: center;
    justify-content: center;
    padding-left: 12px;
    white-space: nowrap;
}

.tab-cube {
    width: 20px;
    height: 20px;
    margin-right: 3px;
    color: #999;
}

.tab-active .tab-cube {
    color: #444;
}

.tab-close {
    width: 28px;
    font-size: 14px;
    color: #888;
    text-align: center;
}

.tab-active .tab-close {
    color: #555;
}

.tab-add {
    display: flex;
    align-items: center;
    justify-content: center;
    width: 35px;
    background-color: #bcbcbc;
    border-radius: 4px 4px 0 0;
}

.tab-add svg {
    width: 16px;
    height: 16px;
}

.tools-right {
    display: flex;
    align-items: center;
    gap: 20px;
    margin-left: 17px;
    padding-bottom: 3px;
}

.tools-right svg {
    width: 21px;
    height: 21px;
}

.avatar {
    display: flex;
    align-items: center;
    justify-content: center;
    width: 30px;
    height: 30px;
    margin-left: 6px;
    border-radius: 50%;
    background-color: #f0f0f0;
    font-size: 12px;
    color: #555;
}

/* ribbon */
.ribbon {
    display: flex;
    flex: none;
    height: 102px;
    background-color: #f0f0f0;
    border-bottom: 2px solid #e4e4e4;
}

.design-btn {
    display: flex;
    align-items: center;
    justify-content: center;
    gap: 5px;
    width: 137px;
    height: 74px;
    margin: 14px 11px 0 15px;
    background-color: #f2f2f2;
    border: 2px solid #e2e2e2;
    border-radius: 4px;
    font-size: 12.5px;
    color: #444;
}

.ribbon-main {
    display: flex;
    flex-direction: column;
}

.ribbon-tabs {
    display: flex;
    gap: 57px;
    height: 29px;
    padding: 7px 0 0 25px;
    font-size: 12.5px;
    color: #555;
}

.r-tab {
    white-space: nowrap;
}

.r-tab-active {
    height: 22px;
    margin: 0 -15px;
    padding: 0 15px;
    border-bottom: 3px solid #1d7fc2;
    color: #1d7fc2;
    font-weight: bold;
}

.ribbon-groups {
    display: flex;
}

.group {
    display: flex;
    flex-direction: column;
    align-items: center;
    height: 70px;
    border-right: 2px solid #e4e4e4;
}

.g-create { width: 329px; padding-right: 3px; }
.g-modify { width: 337px; }
.g-assemble { width: 121px; }
.g-construct { width: 123px; }
.g-inspect { width: 99px; }
.g-insert { width: 85px; }
.g-select { width: 96px; border-right: none; }

.group-icons {
    display: flex;
    justify-content: center;
    height: 54px;
    gap: 10px;
}

.group-icons svg {
    width: 44px;
    height: 48px;
}

.group-icons .select-icon {
    width: 48px;
    height: 49px;
}

.group-label {
    display: flex;
    align-items: center;
    gap: 3px;
    font-size: 12.5px;
    color: #666;
    white-space: nowrap;
}

/* workspace */
.workspace {
    position: relative;
    flex: 1;
    min-height: 0;
    background-color: #fff;
}

.panel {
    position: absolute;
    left: 5px;
    display: flex;
    align-items: center;
    width: 375px;
    height: 31px;
    background-color: #f0f0f0;
    border: 1px solid #d4d4d4;
}

.panel-browser { top: 5px; }
.panel-comments { top: 760px; }

.panel-back {
    position: absolute;
    left: 6px;
    font-size: 13px;
    color: #333;
}

.panel-title {
    margin-left: 30px;
    font-size: 13px;
    color: #777;
}

.panel-title-sm {
    font-size: 12px;
    font-weight: bold;
    color: #999;
}

.panel-dot {
    width: 12px;
    height: 12px;
    margin-left: auto;
}

.panel-handle {
    width: 3px;
    height: 14px;
    margin: 0 3px 0 8px;
    border: 1px solid #bbb;
    border-width: 0 1px;
}

/* browser tree */
.tree {
    position: absolute;
    left: 25px;
    top: 43px;
    display: flex;
    flex-direction: column;
    gap: 5px;
}

.tree-root {
    display: flex;
    align-items: center;
    gap: 10px;
    height: 25px;
}

.tree-arrow-root {
    width: 16px;
    height: 16px;
}

.root-body {
    display: flex;
    align-items: center;
    width: 325px;
    height: 25px;
    padding-left: 2px;
    background-color: #f0f0f0;
}

.eye {
    width: 21px;
    height: 14px;
}

.root-name {
    display: flex;
    align-items: center;
    width: 263px;
    height: 20px;
    margin-left: 8px;
    padding-left: 5px;
    background-color: #999;
    color: #f4f4f4;
    font-size: 13px;
    font-weight: bold;
    white-space: nowrap;
}

.root-cube {
    width: 20px;
    height: 20px;
    margin-right: 16px;
}

.root-radio {
    width: 16px;
    height: 16px;
    margin-left: 4px;
}

.tree-row {
    display: flex;
    align-items: center;
    gap: 9px;
    height: 25px;
    padding-left: 24px;
}

.expand {
    width: 14px;
    height: 16px;
}

.pill {
    display: flex;
    align-items: center;
    height: 25px;
    padding: 0 14px 0 4px;
    background-color: #f0f0f0;
    font-size: 13px;
    color: #555;
    letter-spacing: .2px;
    white-space: nowrap;
}

.pill-icon {
    width: 21px;
    height: 21px;
    margin-right: 17px;
}

.pill-folder {
    width: 21px;
    height: 17px;
    margin: 0 17px 0 10px;
}

/* 3D model */
.model {
    position: absolute;
    left: 560px;
    top: 289px;
    width: 800px;
    height: 250px;
}

.mark {
    font-family: "Liberation Serif", serif;
    font-size: 78px;
    fill: #f4ead8;
    stroke: #5b4b32;
    stroke-width: .7px;
}

.mark-cjk {
    font-family: "Noto Sans CJK SC", "Liberation Serif", serif;
    font-size: 76px;
    fill: #fff;
    stroke: #777;
}

.viewcube {
    position: absolute;
    left: 1780px;
    top: 4px;
    width: 136px;
    height: 135px;
}

.cube-text {
    font-family: "Liberation Sans", sans-serif;
    font-size: 13px;
    font-weight: bold;
    fill: #223;
}

.axis-y {
    font-size: 13px;
    font-weight: bold;
    fill: #33cc33;
    text-anchor: middle;
}

.axis-x {
    font-size: 15px;
    font-weight: bold;
    fill: #d91c1c;
}

/* navigation bar over the canvas */
.navbar {
    position: absolute;
    left: 811px;
    top: 762px;
    display: flex;
    align-items: center;
    gap: 5px;
    width: 295px;
    height: 30px;
    padding-left: 4px;
    background-color: #f0f0f0;
    border-radius: 3px;
}

.nav-orbit {
    width: 20px;
    height: 24px;
}

.nav-caret-first {
    margin-left: 2px;
}

.nav-caret-near {
    margin-left: -3px;
}

.nav-icon {
    width: 21px;
    height: 21px;
    margin-left: 5px;
}

.nav-icon + .nav-icon {
    margin-left: 7px;
}

/* timeline */
.timeline {
    display: flex;
    align-items: center;
    flex: none;
    height: 61px;
    background-color: #f0f0f0;
    border-top: 2px solid #d8d8d8;
}

.player {
    display: flex;
    gap: 15px;
    margin-left: 13px;
}

.player svg {
    width: 16px;
    height: 16px;
}

.features {
    position: relative;
    width: 100px;
    height: 59px;
    margin-left: 30px;
}

.feature-icons {
    display: flex;
    gap: 12px;
    padding-top: 18px;
}

.feature {
    width: 18px;
    height: 20px;
}

.feature-bracket {
    width: 62px;
    height: 8px;
    margin: 4px 0 0 9px;
    border: 1px solid #bbb;
    border-top: none;
}

.marker {
    position: absolute;
    left: 77px;
    top: 12px;
    width: 14px;
    height: 39px;
}

.timeline-gear {
    width: 22px;
    height: 22px;
    margin-left: auto;
    margin-right: 12px;
}

/* windows taskbar */
.taskbar {
    display: flex;
    align-items: center;
    flex: none;
    height: 46px;
    background-color: #d0d0d0;
    font-family: "Noto Sans", sans-serif;
    color: #111;
}

.win-logo {
    width: 20px;
    height: 20px;
    margin: 0 21px 0 20px;
}

.search {
    display: flex;
    align-items: center;
    width: 428px;
    height: 45px;
    align-self: flex-end;
    padding-left: 15px;
    background-color: #fff;
    font-size: 17.7px;
    color: #222;
}

.search svg {
    width: 20px;
    height: 20px;
    margin-right: 14px;
}

.task-apps {
    display: flex;
    align-self: stretch;
}

.task-app {
    display: flex;
    align-items: center;
    justify-content: center;
    width: 62px;
}

.task-app svg {
    width: 22px;
    height: 22px;
}

.task-app .app-big {
    width: 30px;
    height: 30px;
}

.task-app-active {
    background-color: #ececec;
}

.word-w {
    font-family: "Liberation Sans", sans-serif;
    font-size: 12px;
    font-weight: bold;
    fill: #fff;
    text-anchor: middle;
}

.battery {
    display: flex;
    width: 60px;
    height: 26px;
    margin-left: 158px;
    background-color: #111;
    border: 2px solid #fff;
}

.battery-fill {
    display: flex;
    align-items: center;
    justify-content: center;
    width: 50px;
    background-color: #1a9850;
    color: #e8f5e8;
    font-size: 16.5px;
}

.tray-hand {
    width: 14px;
    height: 20px;
    margin-left: 10px;
}

.tray {
    display: flex;
    align-items: center;
    margin-left: 78px;
    font-size: 16.3px;
    white-space: nowrap;
}

.tray-weather {
    width: 26px;
    height: 26px;
}

.temp {
    margin-left: 14px;
}

.cond {
    margin-left: 10px;
}

.tray-ic {
    width: 18px;
    height: 18px;
    margin-left: 12px;
}

.tray-chevron {
    margin-left: 20px;
}

.lang {
    margin-left: 14px;
    font-size: 13.5px;
}

.clock {
    display: flex;
    flex-direction: column;
    align-items: center;
    gap: 4px;
    width: 76px;
    margin-left: 13px;
    font-size: 14.5px;
    line-height: 18px;
}

.notif {
    position: relative;
    width: 20px;
    height: 20px;
    margin-left: 20px;
}

.notif svg {
    width: 20px;
    height: 20px;
}

.notif-count {
    position: absolute;
    left: 8px;
    top: 6px;
    width: 20px;
    height: 20px;
    border: 1px solid #444;
    border-radius: 50%;
    font-size: 13px;
    line-height: 18px;
    text-align: center;
}
```
